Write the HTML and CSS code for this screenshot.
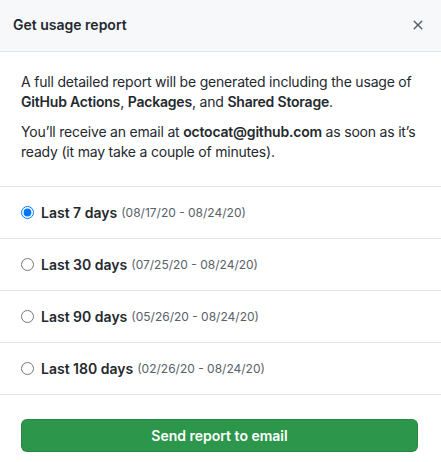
FILE: index.html
```html
<!DOCTYPE html>
<html>
<head>
<meta charset="utf-8">
<link rel="stylesheet" href="styles.css">
</head>
<body>
<div class="dialog">
  <div class="dialog-header">
    <h1 class="dialog-title">Get usage report</h1>
    <button class="close" aria-label="Close">
      <svg width="16" height="16" viewBox="0 0 16 16"><path d="M3.72 3.72a.75.75 0 0 1 1.06 0L8 6.94l3.22-3.22a.75.75 0 1 1 1.06 1.06L9.06 8l3.22 3.22a.75.75 0 1 1-1.06 1.06L8 9.06l-3.22 3.22a.75.75 0 0 1-1.06-1.06L6.94 8 3.72 4.78a.75.75 0 0 1 0-1.06z" fill="#586069"/></svg>
    </button>
  </div>
  <div class="dialog-body">
    <p>A full detailed report will be generated including the usage of <strong>GitHub Actions</strong>, <strong>Packages</strong>, and <strong>Shared Storage</strong>.</p>
    <p>You’ll receive an email at <strong>octocat@github.com</strong> as soon as it’s ready (it may take a couple of minutes).</p>
  </div>
  <div class="options">
    <label class="option"><input type="radio" name="range" checked><span class="label-main">Last 7 days</span><span class="label-note">(08/17/20 - 08/24/20)</span></label>
    <label class="option"><input type="radio" name="range"><span class="label-main">Last 30 days</span><span class="label-note">(07/25/20 - 08/24/20)</span></label>
    <label class="option"><input type="radio" name="range"><span class="label-main">Last 90 days</span><span class="label-note">(05/26/20 - 08/24/20)</span></label>
    <label class="option"><input type="radio" name="range"><span class="label-main">Last 180 days</span><span class="label-note">(02/26/20 - 08/24/20)</span></label>
  </div>
  <div class="dialog-footer">
    <button class="btn-primary">Send report to email</button>
  </div>
</div>
</body>
</html>
```

FILE: styles.css
```css
* { box-sizing: border-box; }
html, body { margin: 0; padding: 0; background: #fff; }
body {
  font-family: Inter, "Liberation Sans", sans-serif;
  font-size: 14px;
  color: #24292e;
}
.dialog { width: 441px; }
.dialog-header {
  height: 52px;
  display: flex;
  align-items: center;
  justify-content: space-between;
  padding: 0 13px 0 13px;
  background: #f6f8fa;
  border-bottom: 1px solid #e1e4e8;
}
.dialog-title {
  margin: 0;
  font-size: 14px;
  font-weight: 600;
  line-height: 20px;
  padding-bottom: 2px;
}
.close {
  border: 0;
  background: none;
  padding: 0;
  width: 16px;
  height: 16px;
  margin-right: 2px;
  margin-bottom: 2px;
  display: flex;
}
.dialog-body {
  padding: 20px 8px 14px 21px;
  border-bottom: 1px solid #e1e4e8;
}
.dialog-body p {
  margin: 0 0 10px;
  line-height: 20px;
  letter-spacing: -0.2px;
}
strong { font-weight: 600; }
.option {
  display: flex;
  align-items: center;
  height: 52px;
  padding: 0 21px;
  border-bottom: 1px solid #e1e4e8;
}
.option input {
  margin: 0 7px 0 0;
  width: 13px;
  height: 13px;
}
.label-main {
  font-weight: 600;
  margin-right: 4px;
}
.label-note {
  font-size: 12px;
  color: #586069;
}
.dialog-footer {
  padding: 24px 23px 16px 21px;
}
.btn-primary {
  width: 100%;
  height: 33px;
  border: 1px solid rgba(27,31,35,.15);
  border-radius: 6px;
  background: #2c974b;
  color: #fff;
  font-family: inherit;
  font-size: 14px;
  font-weight: 600;
}
```
